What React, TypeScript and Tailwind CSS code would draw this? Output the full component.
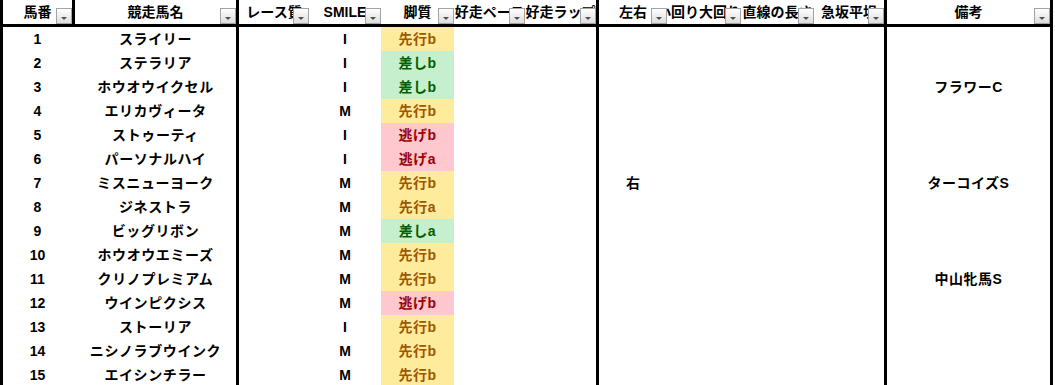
import React from "react";

type Kind = "先行" | "差し" | "逃げ";

interface Horse {
  no: number;
  name: string;
  smile: string;
  style: string;
  side?: string;
  note?: string;
}

const horses: Horse[] = [
  { no: 1, name: "スライリー", smile: "I", style: "先行b" },
  { no: 2, name: "ステラリア", smile: "I", style: "差しb" },
  { no: 3, name: "ホウオウイクセル", smile: "I", style: "差しb", note: "フラワーC" },
  { no: 4, name: "エリカヴィータ", smile: "M", style: "先行b" },
  { no: 5, name: "ストゥーティ", smile: "I", style: "逃げb" },
  { no: 6, name: "パーソナルハイ", smile: "I", style: "逃げa" },
  { no: 7, name: "ミスニューヨーク", smile: "M", style: "先行b", side: "右", note: "ターコイズS" },
  { no: 8, name: "ジネストラ", smile: "M", style: "先行a" },
  { no: 9, name: "ビッグリボン", smile: "M", style: "差しa" },
  { no: 10, name: "ホウオウエミーズ", smile: "M", style: "先行b" },
  { no: 11, name: "クリノプレミアム", smile: "M", style: "先行b", note: "中山牝馬S" },
  { no: 12, name: "ウインピクシス", smile: "M", style: "逃げb" },
  { no: 13, name: "ストーリア", smile: "I", style: "先行b" },
  { no: 14, name: "ニシノラブウインク", smile: "M", style: "先行b" },
  { no: 15, name: "エイシンチラー", smile: "M", style: "先行b" },
];

const styleColors: Record<Kind, string> = {
  先行: "bg-[#ffeb9c] text-[#9c5700]",
  差し: "bg-[#c6efce] text-[#006100]",
  逃げ: "bg-[#ffc7ce] text-[#9c0006]",
};

// Excel-style filter button
const FilterButton = () => (
  <span className="absolute right-0 bottom-0 w-4 h-4 border border-[#a3a3a3] bg-gradient-to-b from-white to-[#dedede] flex items-end justify-center pb-[3px]">
    <svg width="6" height="3" viewBox="0 0 6 3">
      <path d="M0 0 L6 0 L3 3 Z" fill="#505050" />
    </svg>
  </span>
);

const HeadCell = ({ label, className }: { label: string; className: string }) => (
  <div className={`relative h-full overflow-hidden flex items-center justify-center whitespace-nowrap ${className}`}>
    <span>{label}</span>
    <FilterButton />
  </div>
);

const App = () => {
  return (
    <div
      className="w-[1055px] h-[385px] overflow-hidden bg-white text-black text-[14px] font-bold leading-none"
      style={{ fontFamily: '"Liberation Sans", "Noto Sans CJK JP", sans-serif' }}
    >
      <div className="w-[1053px] border-l-[3px] border-black">
        {/* Header */}
        <div className="flex h-[27px] border-b-[3px] border-black">
          <HeadCell label="馬番" className="w-[72px] border-r-[3px] border-black" />
          <HeadCell label="競走馬名" className="w-[164px] border-r-[3px] border-black" />
          <HeadCell label="レース質" className="w-[70px]" />
          <HeadCell label="SMILE" className="w-[72px]" />
          <HeadCell label="脚質" className="w-[73px]" />
          <HeadCell label="好走ペース" className="w-[71px]" />
          <HeadCell label="好走ラップ" className="w-[74px] border-r-[3px] border-black" />
          <HeadCell label="左右" className="w-[68px]" />
          <HeadCell label="小回り大回り" className="w-[74px] pr-[10px]" />
          <HeadCell label="直線の長さ" className="w-[73px]" />
          <HeadCell label="急坂平坦" className="w-[73px] border-r-[3px] border-black" />
          <HeadCell label="備考" className="w-[166px] border-r-[3px] border-black" />
        </div>

        {/* Rows */}
        {horses.map((h) => {
          const kind = h.style.slice(0, 2) as Kind;
          return (
            <div key={h.no} className="flex h-[24px]">
              <div className="w-[69px] flex items-center justify-center">{h.no}</div>
              <div className="w-[167px] pl-[3px] flex items-center justify-center tracking-[0.6px] whitespace-nowrap border-r-[3px] border-black">
                {h.name}
              </div>
              <div className="w-[70px]" />
              <div className="w-[72px] flex items-center justify-center">{h.smile}</div>
              <div className={`w-[73px] flex items-center justify-center tracking-[0.5px] ${styleColors[kind]}`}>
                {h.style}
              </div>
              <div className="w-[71px]" />
              <div className="w-[74px] border-r-[3px] border-black" />
              <div className="w-[68px] flex items-center justify-center">{h.side}</div>
              <div className="w-[74px]" />
              <div className="w-[73px]" />
              <div className="w-[73px] border-r-[3px] border-black" />
              <div className="w-[166px] flex items-center justify-center tracking-[0.5px] whitespace-nowrap border-r-[3px] border-black">
                {h.note}
              </div>
            </div>
          );
        })}
      </div>
    </div>
  );
};

export default App;
